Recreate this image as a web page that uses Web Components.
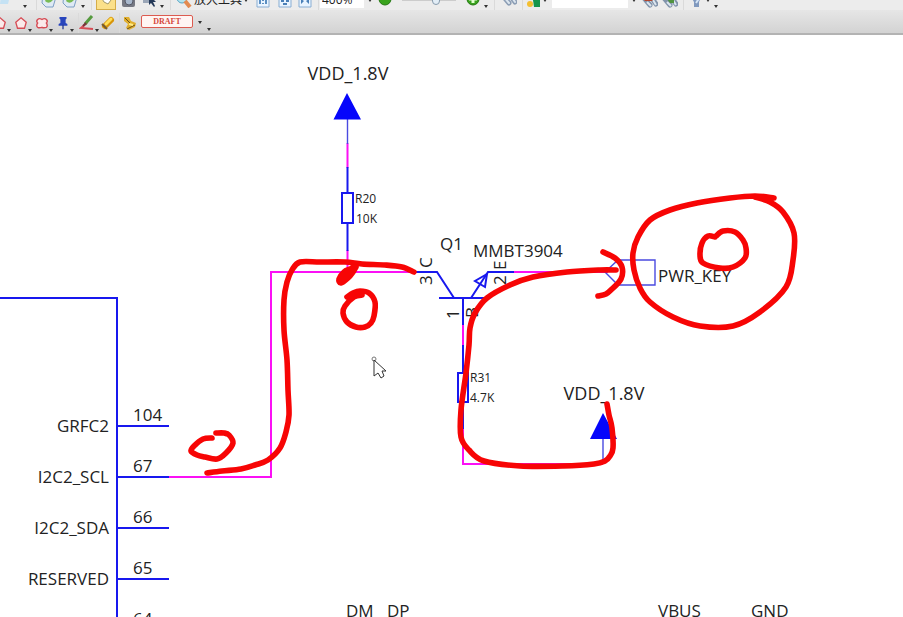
<!DOCTYPE html>
<html lang="zh">
<head>
<meta charset="utf-8">
<title>Schematic viewer</title>
<style>
  html, body { margin: 0; height: 100%; }
  body { font-family: "Open Sans", "Noto Sans", "Noto Sans CJK SC", sans-serif; background: #fff; }
</style>
</head>
<body>
<viewer-app></viewer-app>
<script>
const ICONS = {
  blank: '<path d="M1 4h9l-2 8H0z" fill="#c5e2f4"/>',
  page: '<path d="M2 0h9l4 5-3 10H5L1 11z" fill="#dfeaf5" stroke="#7d9fc4"/><path d="M4 9q4 4 8-1l-1-3q-3 3-6 2z" fill="#79bb55"/>',
  hand: '<path d="M4 1h7l2 7-3 4-4-2-3-5z" fill="#fff" stroke="#a49a6c"/>',
  camera: '<rect x="2" y="2" width="13" height="13" rx="2" fill="#777983"/><circle cx="9" cy="9" r="4" fill="#a9b8cc" stroke="#555866"/>',
  pick: '<path d="M2 3h9v8H2z" fill="#9ba7b8"/><path d="M8 3v10l2-2 3 4 1-1-2-4h3z" fill="#243958"/>',
  lens: '<circle cx="6" cy="6" r="5" fill="#b4e4ee" stroke="#56a5c6"/><path d="M9 9l5 6" stroke="#e28b51" stroke-width="4"/>',
  fit: '<path d="M2 1h12v14H2z" fill="#e9f4ff" stroke="#89aed3"/><path d="M5 7v5m6-5v5M8 8v1m0 2v1" fill="none" stroke="#5b8fc2" stroke-width="2"/>',
  spread: '<path d="M2 1h12v14H2z" fill="#e9f4ff" stroke="#89aed3"/><path d="M4 8h3v2H4zm5 0h3v2H9zM6 11h4v2H6z" fill="#4a80b8"/>',
  width: '<path d="M2 1h12v14H2z" fill="#e9f4ff" stroke="#89aed3"/><path d="M4 7l3 2-3 3zm8 0L9 9l3 3z" fill="#4a80b8"/>',
  ball: '<circle cx="8" cy="7" r="6" fill="#39a31d" stroke="#257814"/><path d="M4 6h8" stroke="#e4ffd3" stroke-width="3"/>',
  plus: '<circle cx="8" cy="7" r="6" fill="#39a31d" stroke="#257814"/><path d="M4 7h8M8 3v8" stroke="#e4ffd3" stroke-width="3"/>',
  find: '<path d="M2 4l6 7m1-8l5 7" stroke="#8c9eb5" stroke-width="5" stroke-linecap="round"/><path d="M3 5l5 6m2-7l4 6" stroke="#dce6ef" stroke-width="2" stroke-linecap="round"/>',
  findred: '<path d="M2 6l6 7m1-8l5 7" stroke="#8294ab" stroke-width="5" stroke-linecap="round"/><path d="M5 10l4 4m2-6l3 5" stroke="#dce6ef" stroke-width="2"/><path d="M2 9l4-4 5 4" fill="#b1452e"/>',
  findgreen: '<path d="M2 6l6 7m1-8l5 7" stroke="#8294ab" stroke-width="5" stroke-linecap="round"/><path d="M5 10l4 4m2-6l3 5" stroke="#dce6ef" stroke-width="2"/><path d="M5 7h4V4h3v7H8z" fill="#519340"/>',
  colors: '<path d="M7 1h8v14H9z" fill="#16954a"/><circle cx="5" cy="12" r="3" fill="#f4bf31"/><path d="M2 3h5v5H2z" fill="#3580c3"/>',
  funnel: '<path d="M2 3h12l-3 7v5H6v-5z" fill="#8199be"/><path d="M8 11l4-6" stroke="#d6e6f7" stroke-width="2"/>',
  penta: '<path d="M8 2l6 5-2 7H4L2 7z" fill="#faeaea" stroke="#d64c55" stroke-width="1.5"/>',
  cloud: '<path d="M3 4q2-2 5 0 3-2 5 0 2 2 0 4 2 3 0 5-3 1-5 0-3 1-5 0-2-2 0-5-2-2 0-4z" fill="#faeaea" stroke="#d64c55" stroke-width="1.6"/>',
  pin: '<path d="M4 1h8v2l-1 1v4l2 1v2H3V9l2-1V4L4 3z" fill="#2845bd"/><path d="M8 10v5" stroke="#243a93" stroke-width="1.5"/>',
  pencil: '<path d="M8 8l-6 5 12 1" fill="none" stroke="#d64c55" stroke-width="2"/><path d="M6 9l7-8" stroke="#559a3e" stroke-width="3"/><path d="M4 11l3-3" stroke="#75333b" stroke-width="2"/>',
  eraser: '<path d="M5 11l6-6" stroke="#d8950a" stroke-width="6" stroke-linecap="round"/><path d="M6 9l5-5" stroke="#ffe05b" stroke-width="3" stroke-linecap="round"/><path d="M2 9l5 5" stroke="#735c36" stroke-width="2"/>',
  stamp: '<path d="M2 2l5 0 2 4 5 2-1 4-6 3-3-2 2-4-4-3z" fill="#e0ae2c"/><path d="M3 3l5 5M5 14l8-4" stroke="#6d521c"/><path d="M7 9l4 1" stroke="#ffeb85" stroke-width="2"/>'
};

class ToolButton extends HTMLElement {
  connectedCallback() {
    const icon = this.getAttribute('icon');
    this.attachShadow({ mode: 'open' }).innerHTML = `
      <style>
        :host { display: block; flex: none; width: var(--w, 20px); height: 20px; }
        button { display: flex; align-items: center; justify-content: center; width: 100%; height: 100%;
          padding: 0; border: 0; background: none; }
        :host([active]) button { background: #fbe08a; border: 1px solid #d5ad49; }
        svg { flex: none; display: block; width: 16px; height: 16px; }
        :host([small]) svg { width: 14px; height: 14px; }
      </style>
      <button type="button" aria-label="${icon}">
        <svg viewBox="0 0 16 16" aria-hidden="true">${ICONS[icon]}</svg>
      </button>`;
  }
}
customElements.define('tool-button', ToolButton);

class ToolMore extends HTMLElement {
  connectedCallback() {
    this.attachShadow({ mode: 'open' }).innerHTML = `
      <style>
        :host { display: block; flex: none; width: var(--w, 8px); height: 20px; }
        button { display: flex; align-items: flex-end; justify-content: center; width: 100%; height: 100%;
          padding: 0 0 2px; border: 0; background: none; }
        :host([up]) button { padding-bottom: 8px; }
        :host([low]) button { padding-bottom: 1px; justify-content: flex-start; }
        i { flex: none; border: 2px solid transparent; border-top: 3px solid #333; border-bottom: 0; }
      </style>
      <button type="button" aria-label="more"><i></i></button>`;
  }
}
customElements.define('tool-more', ToolMore);

class ToolSeparator extends HTMLElement {
  connectedCallback() {
    this.attachShadow({ mode: 'open' }).innerHTML = `
      <style>
        :host { display: flex; justify-content: center; flex: none; width: var(--w, 8px); height: 20px; }
        span { width: 1px; height: 100%; background: #dadada; }
      </style><span></span>`;
  }
}
customElements.define('tool-separator', ToolSeparator);

class ToolRow extends HTMLElement {
  connectedCallback() {
    this.attachShadow({ mode: 'open' }).innerHTML = `
      <style>
        :host { display: flex; align-items: flex-end; overflow: hidden; height: 23px;
          background: linear-gradient(#e6e6e6, #d3d3d3); }
        :host([clipped]) { height: 10px; background: #ececec; }
      </style><slot></slot>`;
  }
}
customElements.define('tool-row', ToolRow);

class SchematicCanvas extends HTMLElement {
  /* Smooth freehand stroke through a list of points. */
  static stroke(list) {
    const n = list.trim().split(/\s+/).map(p => p.split(',').map(Number));
    let d = `M${n[0]}`;
    for (let i = 0; i < n.length - 1; i++) {
      const a = n[i - 1] || n[i], b = n[i], c = n[i + 1], e = n[i + 2] || c;
      d += `C${b[0] + (c[0] - a[0]) / 6},${b[1] + (c[1] - a[1]) / 6} ${c[0] - (e[0] - b[0]) / 6},${c[1] - (e[1] - b[1]) / 6} ${c}`;
    }
    return `<path d="${d}"/>`;
  }
  connectedCallback() {
    const s = SchematicCanvas.stroke;
    const pin = (y, name, num) => `<text class="end" x="109" y="${y + 6}">${name}</text><text x="133" y="${y - 5}">${num}</text>`;
    this.attachShadow({ mode: 'open' }).innerHTML = `
      <style>
        :host { display: block; min-height: 0; overflow: hidden; background: #fff; }
        svg { display: block; width: 100%; height: 100%; }
        text { font-size: 17px; fill: #222; }
        .big { font-size: 18px; }
        .small { font-size: 12px; }
        .end { text-anchor: end; }
        .mid { text-anchor: middle; }
        .part { fill: none; stroke: #1818ee; stroke-width: 2; }
        .thin { fill: none; stroke: #4a4ae0; stroke-width: 1.4; }
        .net { fill: none; stroke: #fb10f5; stroke-width: 2; }
        .ink { fill: none; stroke: #f70505; stroke-width: 5.6; stroke-linecap: round; stroke-linejoin: round; }
      </style>
      <svg role="img" aria-label="Schematic"><g transform="translate(0 -35)">
        <path class="net" d="M169 477H271V272H416M347.500 143V168M347.500 250V272M514 272H608M463 325V346M463 428V464H603"/>
        <path class="part" d="M0 298H117V640M117 426H169M117 477H169M117 528H169M117 579H169"/>
        <path class="part" d="M347.500 167V192M347.500 224V251M342 193H353V223H342Z"/>
        <path class="part" d="M416 272H437L454 298M439 298H486M471 298L488 272H514M463 298V325M463 345V372M463 403V429M458 373H468V402H458Z"/>
        <path class="part" d="M487 274L475 281L485 287Z"/>
        <path class="thin" d="M347.500 119V144M603 438V464M605 272L618 260H655V285H618Z"/>
        <path d="M347 93L361 119.500H333.500ZM603 413L617 439H590Z" fill="#0505fb"/>
        <text class="big mid" x="348" y="80">VDD_1.8V</text>
        <text class="big mid" x="604" y="400">VDD_1.8V</text>
        <text class="small" x="355" y="203">R20</text><text class="small" x="356" y="223">10K</text>
        <text class="small" x="470" y="382">R31</text><text class="small" x="470" y="402">4.7K</text>
        <text x="440" y="250">Q1</text>
        <text x="473" y="257">MMBT3904</text>
        <text x="658" y="282">PWR_KEY</text>
        <text transform="translate(432 268) rotate(-90)">C</text>
        <text transform="translate(432 285) rotate(-90)">3</text>
        <text transform="translate(506 270) rotate(-90)">E</text>
        <text transform="translate(506 285) rotate(-90)">2</text>
        <text transform="translate(459 319) rotate(-90)">1</text>
        <text transform="translate(478 318) rotate(-90)">B</text>
        ${pin(426, 'GRFC2', '104')}${pin(477, 'I2C2_SCL', '67')}${pin(528, 'I2C2_SDA', '66')}${pin(579, 'RESERVED', '65')}
        <text x="133" y="625">64</text>
        <text x="346" y="617">DM</text><text x="387" y="617">DP</text>
        <text x="658" y="617">VBUS</text><text x="751" y="617">GND</text>
        <g class="ink">
          ${s('207,473 222,471 241,469 255,465 268,460 280,448 286,432 289,415 288,390 287,360 284,330 284,300 287,282 292,270 300,262 320,262 345,262 362,264 385,265 402,267 414,272')}
          ${s('212,438 203,439 194,446 191,451 197,455 205,457 217,459 226,453 233,443 229,435 224,433 216,433')}
          ${s('347,297 353,293 360,291 369,293 375,302 374,316 371,323 365,327 356,327 347,322 343,313 345,306 354,297 362,295 350,296')}
          ${s('356,267 353,272 348,278 341,283 339,279 344,272 350,269 354,267 347,275 342,279 346,273')}
          ${s('607,404 609,415 612,428 613,448 610,456 605,461 594,464 563,466 520,466 484,461 469,450 461,437 461,410 466,373 469,345 470,328 475,313 487,298 510,285 533,277 567,272 600,270 616,270')}
          ${s('603,252 615,258 622,267 621,279 612,289 606,294 598,296')}
          ${s('774,198 755,196 730,198 697,203 670,210 650,220 638,237 633,253 634,270 640,288 650,302 673,317 700,326 733,326 760,312 786,287 793,260 794,233 783,212 770,202 755,197')}
          ${s('715,237 708,236 702,243 700,255 703,263 720,268 733,267 745,258 746,248 743,240 735,232 723,231 716,236')}
        </g>
        <circle cx="374" cy="359" r="2" fill="none" stroke="#777"/>
        <path d="M374 360V376L378 373L381 378L384 376L382 371H386Z" fill="#fff" stroke="#333"/>
      </g></svg>`;
  }
}
customElements.define('schematic-canvas', SchematicCanvas);

class ViewerApp extends HTMLElement {
  connectedCallback() {
    const b = (icon, w, extra = '') => `<tool-button icon="${icon}" style="--w:${w}px" ${extra}></tool-button>`;
    const m = (w, extra = '') => `<tool-more style="--w:${w}px" ${extra}></tool-more>`;
    const p = w => `<tool-separator style="--w:${w}px"></tool-separator>`;
    this.attachShadow({ mode: 'open' }).innerHTML = `
      <style>
        :host { display: grid; grid-template-rows: auto 1fr; height: 100vh; overflow: hidden; }
        header { border-bottom: 2px solid #b3b3b3; }
        input, .name { font: 12px/16px "Open Sans", "Noto Sans CJK SC", sans-serif; color: #222; }
        .name { flex: none; width: 48px; height: 20px; padding: 0; border: 0; background: none;
          text-align: left; white-space: nowrap; }
        .zoom { box-sizing: border-box; flex: none; width: 44px; height: 16px; padding: 0 2px; border: 0;
          margin-bottom: 2px; background: #fff; }
        .level { flex: none; width: 70px; height: 20px; margin: 0; padding: 0 8px; box-sizing: border-box;
          appearance: none; background: none; }
        .level::-webkit-slider-runnable-track { height: 1px; background: #ccc; }
        .level::-webkit-slider-thumb { appearance: none; width: 8px; height: 10px; margin-top: -5px;
          border: 1px solid #879bad; border-radius: 2px 2px 4px 4px; background: #e2edf6; }
        .query { flex: none; width: 76px; height: 20px; margin: 0 0 2px 4px; padding: 0; border: 0;
          background: #fff; box-sizing: border-box; }
        .edge { margin-left: -7px; }
        .draft { flex: none; width: 52px; height: 13px; margin: 0 0 5px 2px; padding: 0; border: 1px solid #dc5b50;
          border-radius: 2px; background: #fff5f3; color: #d5483d; font: bold 8px/10px "Liberation Serif", serif; }
        .drop { margin-bottom: 7px; }
      </style>
      <header>
        <tool-row clipped>
          ${b('blank', 16)}${m(18)}${p(4)}${b('page', 22)}${b('page', 20)}${m(6)}${p(10)}${b('hand', 20, 'active')}${b('camera', 24)}${b('pick', 18)}${m(8)}${p(8)}${b('lens', 20)}
          <button class="name" type="button">放大工具</button>${m(8, 'up')}
          ${b('fit', 26)}${b('spread', 18)}${b('width', 22)}${p(4)}
          <input class="zoom" aria-label="Zoom" value="400%">${m(12, 'up')}
          ${b('ball', 18)}<input class="level" type="range" aria-label="Zoom level" value="66">${b('plus', 18)}${m(8)}${p(8)}
          ${b('find', 22)}${p(4)}${b('colors', 18)}${m(6, 'up')}
          <input class="query" aria-label="Search">${m(12, 'up')}
          ${b('findred', 20)}${b('findgreen', 20)}${p(6)}${b('funnel', 20)}${m(4, 'up')}${m(12)}
        </tool-row>
        <tool-row>
          ${b('penta', 14, 'small class="edge"')}${m(7, 'low')}${b('penta', 14, 'small')}${m(7, 'low')}${b('cloud', 14, 'small')}${m(7, 'low')}${b('pin', 14, 'small')}${m(7, 'low')}
          ${p(2)}${b('pencil', 16)}${m(4, 'low')}${b('eraser', 18)}${p(4)}${b('stamp', 18)}
          <button class="draft" type="button">DRAFT</button>${m(14, 'class="drop"')}${m(4)}
        </tool-row>
      </header>
      <schematic-canvas></schematic-canvas>`;
  }
}
customElements.define('viewer-app', ViewerApp);
</script>
</body>
</html>
